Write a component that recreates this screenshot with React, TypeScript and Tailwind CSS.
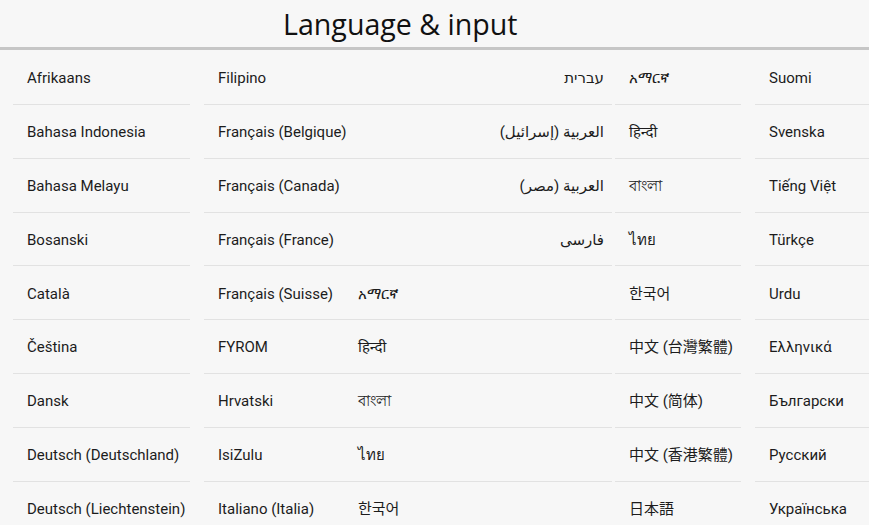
type Item = { label: string; rtl?: boolean };

const FONT = "font-['Roboto','Noto_Sans','DejaVu_Sans','Noto_Sans_CJK_KR','Noto_Sans_CJK_SC',sans-serif]";

const columns: { width: string; pad: string; items: Item[] }[] = [
  {
    width: 'ml-[13px] w-[177px]',
    pad: 'pl-[14px]',
    items: [
      { label: 'Afrikaans' },
      { label: 'Bahasa Indonesia' },
      { label: 'Bahasa Melayu' },
      { label: 'Bosanski' },
      { label: 'Català' },
      { label: 'Čeština' },
      { label: 'Dansk' },
      { label: 'Deutsch (Deutschland)' },
      { label: 'Deutsch (Liechtenstein)' },
    ],
  },
  {
    width: 'ml-[14px] w-[148px]',
    pad: 'pl-[14px]',
    items: [
      { label: 'Filipino' },
      { label: 'Français (Belgique)' },
      { label: 'Français (Canada)' },
      { label: 'Français (France)' },
      { label: 'Français (Suisse)' },
      { label: 'FYROM' },
      { label: 'Hrvatski' },
      { label: 'IsiZulu' },
      { label: 'Italiano (Italia)' },
    ],
  },
  {
    width: 'w-[260px]',
    pad: 'pl-[6px] pr-[8px]',
    items: [
      { label: 'עברית', rtl: true },
      { label: 'العربية (إسرائيل)', rtl: true },
      { label: 'العربية (مصر)', rtl: true },
      { label: 'فارسی', rtl: true },
      { label: 'አማርኛ' },
      { label: 'हिन्दी' },
      { label: 'বাংলা' },
      { label: 'ไทย' },
      { label: '한국어' },
    ],
  },
  {
    width: 'ml-[3px] w-[126px]',
    pad: 'pl-[14px]',
    items: [
      { label: 'አማርኛ' },
      { label: 'हिन्दी' },
      { label: 'বাংলা' },
      { label: 'ไทย' },
      { label: '한국어' },
      { label: '中文 (台灣繁體)' },
      { label: '中文 (简体)' },
      { label: '中文 (香港繁體)' },
      { label: '日本語' },
    ],
  },
  {
    width: 'ml-[14px] w-[130px]',
    pad: 'pl-[14px]',
    items: [
      { label: 'Suomi' },
      { label: 'Svenska' },
      { label: 'Tiếng Việt' },
      { label: 'Türkçe' },
      { label: 'Urdu' },
      { label: 'Ελληνικά' },
      { label: 'Български' },
      { label: 'Русский' },
      { label: 'Українська' },
    ],
  },
];

export default function App() {
  return (
    <div className={`h-screen overflow-hidden bg-[#f7f7f7] text-[#1c1c1c] ${FONT}`}>
      {/* Header */}
      <div className="h-[50px] border-b-[3px] border-[#c6c6c6] pl-[283px] flex items-center">
        <h1 className="text-[28.6px] font-['Open_Sans','Noto_Sans',sans-serif] text-[#111] leading-none pt-[2px]">
          Language &amp; input
        </h1>
      </div>

      {/* Language list */}
      <div className="flex pt-[1px]">
        {columns.map((col, ci) => (
          <div key={ci} className={`flex flex-col shrink-0 ${col.width}`}>
            {col.items.map((item, i) => (
              <div
                key={i}
                dir={item.rtl ? 'rtl' : 'ltr'}
                className={`h-[53.86px] shrink-0 flex items-center border-b border-[#e2e2e2] text-[15px] whitespace-nowrap pt-[2px] ${col.pad}`}
              >
                {item.label}
              </div>
            ))}
          </div>
        ))}
      </div>
    </div>
  );
}
